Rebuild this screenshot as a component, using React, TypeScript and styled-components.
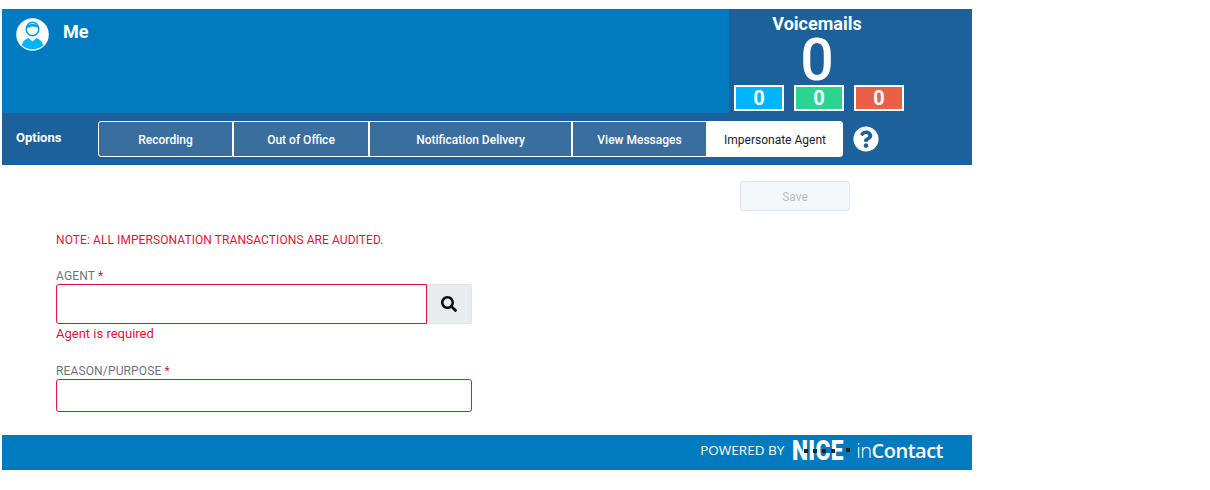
import React from "react";
import styled, { createGlobalStyle } from "styled-components";
import { FaQuestionCircle, FaSearch } from "react-icons/fa";

const COLORS = {
  blue: "#017ac0",
  darkBlue: "#1c619b",
  tab: "#3a6e9e",
  red: "#dc143c",
  grey: "#6c757d",
};

const GlobalStyle = createGlobalStyle`
  html, body {
    margin: 0;
    padding: 0;
    background: #fff;
    font-family: Roboto, "Liberation Sans", sans-serif;
  }
  * {
    box-sizing: border-box;
  }
`;

const Page = styled.div`
  width: 970px;
  margin: 9px 0 0 2px;
`;

const Header = styled.header`
  display: flex;
  height: 104px;
  background: ${COLORS.blue};
`;

const Profile = styled.div`
  flex: 1;
  display: flex;
  align-items: flex-start;
  gap: 15px;
  padding: 9px 0 0 14px;
`;

const ProfileName = styled.div`
  color: #fff;
  font-size: 18px;
  font-weight: 700;
  line-height: 28px;
  margin-left: -1px;
`;

const VoicemailPanel = styled.div`
  width: 243px;
  height: 104px;
  background: ${COLORS.darkBlue};
  padding-left: 5px;
`;

const VoicemailInner = styled.div`
  width: 170px;
  display: flex;
  flex-direction: column;
  align-items: center;
`;

const VoicemailTitle = styled.div`
  color: #fff;
  font-size: 18px;
  font-weight: 700;
  line-height: 20px;
  margin: 5px 4px 0 0;
`;

const VoicemailCount = styled.div`
  color: #fff;
  font-size: 59px;
  font-weight: 500;
  line-height: 51px;
  height: 51px;
  margin-right: 4px;
`;

const Counters = styled.div`
  display: flex;
  gap: 10px;
`;

const Counter = styled.div<{ $bg: string }>`
  width: 50px;
  height: 26px;
  background: ${(p) => p.$bg};
  border: 2px solid #fff;
  color: #fff;
  font-size: 20px;
  font-weight: 700;
  line-height: 23px;
  text-align: center;
`;

const Nav = styled.nav`
  display: flex;
  align-items: center;
  height: 52px;
  background: ${COLORS.darkBlue};
  padding-left: 14px;
`;

const NavTitle = styled.div`
  width: 82px;
  color: #fff;
  font-size: 13px;
  font-weight: 700;
  margin-top: -3px;
`;

const Tabs = styled.div`
  display: grid;
  grid-template-columns: 135px 136px 203px 135px 136px;
  height: 36px;
`;

const Tab = styled.button<{ $active?: boolean }>`
  border: 1px solid #fff;
  background: ${(p) => (p.$active ? "#fff" : COLORS.tab)};
  color: ${(p) => (p.$active ? "#1b1b2f" : "#fff")};
  font-family: inherit;
  font-size: 12px;
  font-weight: ${(p) => (p.$active ? 400 : 500)};
  padding: 1px 0 0;

  &:first-child {
    border-radius: 3px 0 0 3px;
  }
  &:last-child {
    border-radius: 0 3px 3px 0;
  }
`;

const HelpIcon = styled(FaQuestionCircle)`
  margin-left: 10px;
  color: #fff;
  font-size: 26px;
`;

const Form = styled.main`
  height: 270px;
  padding: 16px 0 0 54px;
`;

const SaveRow = styled.div`
  display: flex;
  justify-content: flex-end;
  padding-right: 122px;
`;

const SaveButton = styled.button`
  width: 110px;
  height: 30px;
  padding: 2px 0 0;
  background: #f5f8fb;
  border: 1px solid #e2e6ea;
  border-radius: 3px;
  color: #b6bdc5;
  font-family: inherit;
  font-size: 12px;
`;

const Note = styled.div`
  margin-top: 21px;
  color: ${COLORS.red};
  font-size: 12px;
  line-height: 16px;
  letter-spacing: 0.08px;
`;

const Field = styled.div<{ $top: number }>`
  width: 416px;
  margin-top: ${(p) => p.$top}px;
`;

const Label = styled.label`
  display: block;
  color: ${COLORS.grey};
  font-size: 12px;
  line-height: 16px;
  letter-spacing: 0.14px;
`;

const Star = styled.span`
  color: ${COLORS.red};
`;

const InputGroup = styled.div`
  display: flex;
`;

const AgentInput = styled.input`
  flex: 1;
  min-width: 0;
  height: 40px;
  border: 1px solid ${COLORS.red};
  border-radius: 3px 0 0 3px;
  outline: none;
`;

const SearchButton = styled.button`
  display: flex;
  align-items: center;
  justify-content: center;
  width: 45px;
  height: 40px;
  background: #e9ecef;
  border: 1px solid #dfe2e6;
  border-left: none;
  border-radius: 0 3px 3px 0;
  color: #0b0b0b;
  font-size: 16px;
`;

const ErrorText = styled.div`
  color: ${COLORS.red};
  font-size: 13px;
  line-height: 20px;
`;

const ReasonInput = styled.input`
  display: block;
  width: 100%;
  height: 33px;
  border: 1px solid ${COLORS.red};
  border-radius: 3px;
  outline: none;
`;

const Footer = styled.footer`
  display: flex;
  align-items: center;
  justify-content: flex-end;
  height: 35px;
  padding: 0 29px 5px 0;
  background: ${COLORS.blue};
  color: #fff;
`;

const PoweredBy = styled.span`
  font-family: "Open Sans", sans-serif;
  font-size: 13.5px;
  margin-right: 8px;
`;

const NiceMark = styled.span`
  position: relative;
  display: block;
  width: 51px;
  height: 20px;
  margin-top: 1px;
  font-family: Roboto, sans-serif;
  font-size: 27px;
  font-weight: 900;
  line-height: 20px;
`;

const NiceLetters = styled.span`
  display: inline-block;
  transform: scaleX(0.84);
  transform-origin: left center;
  letter-spacing: 0.4px;
  white-space: nowrap;
`;

const NiceDots = styled.span`
  display: flex;
  gap: 5px;
  position: absolute;
  left: 12px;
  top: 8px;
`;

const Dot = styled.span`
  width: 4px;
  height: 4px;
  background: #222;
  flex: none;
`;

const FooterDot = styled(Dot)`
  margin: 0 6px 0 3px;
`;

const InContact = styled.span`
  font-family: "Open Sans", sans-serif;
  font-size: 20px;
  font-weight: 600;
  letter-spacing: -0.5px;
`;

const InLight = styled.span`
  font-weight: 300;
`;

const Avatar = () => (
  <svg width="33" height="33" viewBox="0 0 33 33">
    <circle cx="16.5" cy="16.500" r="16.300" fill="#fff" />
    <path
      d="M6 27.500c.5-4 2-5.500 6.500-7.500l4 3.500 4-3.500c4.500 2 6 3.500 6.500 7.500a16.300 16.300 0 0 1-21 0z"
      fill="#00b4ff"
    />
    <ellipse cx="16.500" cy="11" rx="6.300" ry="6.800" fill="none" stroke="#00a0e6" strokeWidth="1.500" />
    <path d="M10.500 10c0-5.500 12-5.500 12 0-2.500-.5-3.500-1.700-6-1.400-2.500.3-3.500 1.400-6 1.400z" fill="#00a0e6" />
  </svg>
);

const App: React.FC = () => {
  return (
    <Page>
      <GlobalStyle />
      <Header>
        <Profile>
          <Avatar />
          <ProfileName>Me</ProfileName>
        </Profile>
        <VoicemailPanel>
          <VoicemailInner>
            <VoicemailTitle>Voicemails</VoicemailTitle>
            <VoicemailCount>0</VoicemailCount>
            <Counters>
              <Counter $bg="#00b4ff">0</Counter>
              <Counter $bg="#2bd48f">0</Counter>
              <Counter $bg="#e95f47">0</Counter>
            </Counters>
          </VoicemailInner>
        </VoicemailPanel>
      </Header>
      <Nav>
        <NavTitle>Options</NavTitle>
        <Tabs>
          <Tab>Recording</Tab>
          <Tab>Out of Office</Tab>
          <Tab>Notification Delivery</Tab>
          <Tab>View Messages</Tab>
          <Tab $active>Impersonate Agent</Tab>
        </Tabs>
        <HelpIcon />
      </Nav>
      <Form>
        <SaveRow>
          <SaveButton disabled>Save</SaveButton>
        </SaveRow>
        <Note>NOTE: ALL IMPERSONATION TRANSACTIONS ARE AUDITED.</Note>
        <Field $top={20}>
          <Label>
            AGENT <Star>*</Star>
          </Label>
          <InputGroup>
            <AgentInput />
            <SearchButton>
              <FaSearch />
            </SearchButton>
          </InputGroup>
          <ErrorText>Agent is required</ErrorText>
        </Field>
        <Field $top={19}>
          <Label>
            REASON/PURPOSE <Star>*</Star>
          </Label>
          <ReasonInput />
        </Field>
      </Form>
      <Footer>
        <PoweredBy>POWERED BY</PoweredBy>
        <NiceMark>
          <NiceLetters>NICE</NiceLetters>
          <NiceDots>
            <Dot />
            <Dot />
            <Dot />
            <Dot />
          </NiceDots>
        </NiceMark>
        <FooterDot />
        <InContact>
          <InLight>in</InLight>Contact
        </InContact>
      </Footer>
    </Page>
  );
};

export default App;
